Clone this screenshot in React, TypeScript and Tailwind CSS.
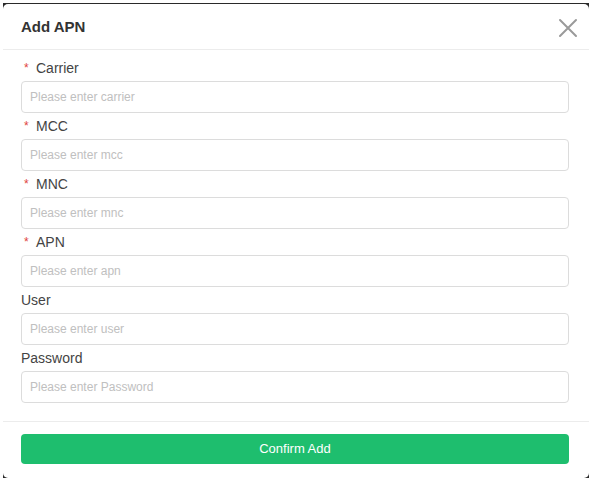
const fields = [
  { label: 'Carrier', placeholder: 'Please enter carrier', required: true },
  { label: 'MCC', placeholder: 'Please enter mcc', required: true },
  { label: 'MNC', placeholder: 'Please enter mnc', required: true },
  { label: 'APN', placeholder: 'Please enter apn', required: true },
  { label: 'User', placeholder: 'Please enter user', required: false },
  { label: 'Password', placeholder: 'Please enter Password', required: false },
];

export default function App() {
  return (
    <div
      className="w-[594px] h-[483px] bg-white pt-[3px] pl-[3px]"
      style={{ fontFamily: '"Liberation Sans", Arial, sans-serif' }}
    >
      <div className="w-[586px] h-[475px] bg-[#2a2a2a] pt-[1px]">
        {/* Dialog */}
        <div className="h-full w-full bg-white rounded-[5px] flex flex-col">
          {/* Header */}
          <div className="h-[46px] flex items-center justify-between pl-[18px] pr-[11px] border-b border-[#ececec]">
            <h2 className="text-[15px] font-bold text-[#333] pt-[1px]">Add APN</h2>
            <svg width="20" height="20" viewBox="0 0 20 20" className="mt-[3px]">
              <path d="M2 2 L18 18 M18 2 L2 18" stroke="#9a9a9a" strokeWidth="2" strokeLinecap="round" />
            </svg>
          </div>

          {/* Form */}
          <div className="pt-[8px] pl-[18px] pr-[20px] pb-[18px] flex flex-col gap-[3px] border-b border-[#ececec]">
            {fields.map((f) => (
              <div key={f.label} className="flex flex-col gap-[3px]">
                <label className="h-[20px] flex items-center text-[14px] text-[#444]">
                  {f.required && <span className="text-[#e0443c] text-[12px] w-[15px] pl-[3px]">*</span>}
                  {f.label}
                </label>
                <input
                  className="h-[32px] w-full border border-[#dcdcdc] rounded-[4px] px-[8px] text-[12px] text-[#333] placeholder:text-[#c0c0c0] outline-none"
                  placeholder={f.placeholder}
                />
              </div>
            ))}
          </div>

          {/* Footer */}
          <div className="pt-[12px] pl-[18px] pr-[20px]">
            <button className="h-[30px] w-full rounded-[4px] bg-[#1ebe6e] text-white text-[13px]">
              Confirm Add
            </button>
          </div>
        </div>
      </div>
    </div>
  );
}
